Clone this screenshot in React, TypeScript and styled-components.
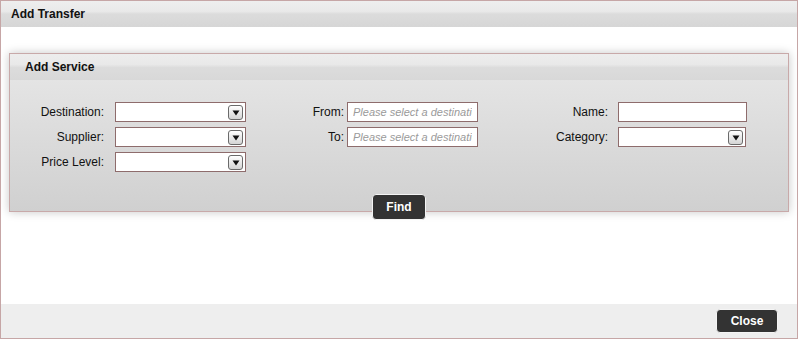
import * as React from 'react';
import styled, { createGlobalStyle } from 'styled-components';

const GlobalStyle = createGlobalStyle`
  html, body {
    margin: 0;
    padding: 0;
    background: #fff;
  }
  body {
    font-family: 'Liberation Sans', Arial, sans-serif;
    font-size: 12px;
    color: #222;
  }
  * {
    box-sizing: border-box;
  }
`;

function DropArrow() {
  return (
    <ArrowBox>
      <svg width="8" height="6" viewBox="0 0 8 6">
        <path d="M0.5 0.5 L7.5 0.5 L4 5.5 Z" fill="#111" />
      </svg>
    </ArrowBox>
  );
}

function App() {
  return (
    <>
      <GlobalStyle />
      <Window>
        <TitleBar>Add Transfer</TitleBar>
        <Main>
          <Panel>
            <PanelHeader>Add Service</PanelHeader>
            <PanelBody>
              <FieldGrid>
                <Label $gap={11}>Destination:</Label>
                <SelectBox $width={131}>
                  <DropArrow />
                </SelectBox>
                <Label $gap={3}>From:</Label>
                <TextBox $width={131} placeholder="Please select a destination" />
                <Label $gap={10}>Name:</Label>
                <TextBox $width={129} />

                <Label $gap={11}>Supplier:</Label>
                <SelectBox $width={131}>
                  <DropArrow />
                </SelectBox>
                <Label $gap={3}>To:</Label>
                <TextBox $width={131} placeholder="Please select a destination" />
                <Label $gap={10}>Category:</Label>
                <SelectBox $width={128}>
                  <DropArrow />
                </SelectBox>

                <Label $gap={11}>Price Level:</Label>
                <SelectBox $width={131}>
                  <DropArrow />
                </SelectBox>
              </FieldGrid>
              <ButtonRow>
                <DarkButton $width={54} $height={26}>
                  Find
                </DarkButton>
              </ButtonRow>
            </PanelBody>
          </Panel>
        </Main>
        <Footer>
          <DarkButton $width={62} $height={24}>
            Close
          </DarkButton>
        </Footer>
      </Window>
    </>
  );
}

const Window = styled.div`
  width: 798px;
  height: 339px;
  border: 1px solid #c6a6a6;
  display: flex;
  flex-direction: column;
  overflow: hidden;
`;

const TitleBar = styled.div`
  height: 26px;
  padding: 0 10px;
  display: flex;
  align-items: center;
  font-weight: bold;
  font-size: 12px;
  color: #111;
  background: linear-gradient(#eeeeee 0%, #e9e9e9 40%, #dcdcdc 50%, #d6d6d6 100%);
`;

const Main = styled.div`
  flex: 1;
  padding: 26px 8px 0;
  background: #fff;
`;

const Panel = styled.div`
  border: 1px solid #c8a9a9;
  box-shadow: 0 0 9px rgba(0, 0, 0, 0.22);
`;

const PanelHeader = styled.div`
  height: 26px;
  padding: 0 15px;
  display: flex;
  align-items: center;
  font-weight: bold;
  font-size: 12px;
  color: #111;
  background: linear-gradient(#ededed 0%, #e9e9e9 40%, #dcdcdc 52%, #d8d8d8 100%);
`;

const PanelBody = styled.div`
  display: flex;
  flex-direction: column;
  padding-top: 22px;
  background: linear-gradient(#e4e4e4, #d0d0d0);
`;

const FieldGrid = styled.div`
  display: grid;
  grid-template-columns: 105px 131px 101px 131px 140px 129px;
  grid-auto-rows: 20px;
  row-gap: 5px;
`;

const Label = styled.label<{ $gap: number }>`
  display: flex;
  align-items: center;
  justify-content: flex-end;
  padding-right: ${(p) => p.$gap}px;
  font-size: 12px;
  color: #111;
  white-space: nowrap;
`;

const SelectBox = styled.div<{ $width: number }>`
  width: ${(p) => p.$width}px;
  height: 20px;
  background: #fff;
  border: 1px solid #8e6c6c;
  display: flex;
  align-items: center;
  justify-content: flex-end;
  padding-right: 2px;
`;

const ArrowBox = styled.span`
  width: 15px;
  height: 15px;
  border: 1px solid #6a6a6a;
  border-radius: 3px;
  background: linear-gradient(#ffffff, #d4d4d4);
  display: flex;
  align-items: center;
  justify-content: center;
  padding-top: 1px;
`;

const TextBox = styled.input<{ $width: number }>`
  width: ${(p) => p.$width}px;
  height: 20px;
  margin: 0;
  padding: 0 5px;
  background: #fff;
  border: 1px solid #8e6c6c;
  border-radius: 0;
  font-family: 'Liberation Sans', Arial, sans-serif;
  font-size: 11px;
  color: #222;
  outline: none;

  &::placeholder {
    color: #9a9a9a;
    font-style: italic;
  }
`;

const ButtonRow = styled.div`
  height: 17px;
  margin-top: 22px;
  display: flex;
  justify-content: center;
  align-items: flex-start;
`;

const DarkButton = styled.button<{ $width: number; $height: number }>`
  flex-shrink: 0;
  width: ${(p) => p.$width}px;
  height: ${(p) => p.$height}px;
  padding: 0;
  background: #333333;
  color: #fff;
  border: 1px solid #f4f4f4;
  border-radius: 4px;
  font-family: 'Liberation Sans', Arial, sans-serif;
  font-weight: bold;
  font-size: 12px;
  cursor: pointer;
`;

const Footer = styled.div`
  height: 34px;
  background: #eeeeee;
  display: flex;
  align-items: center;
  justify-content: flex-end;
  padding-right: 19px;
`;

export default App;
